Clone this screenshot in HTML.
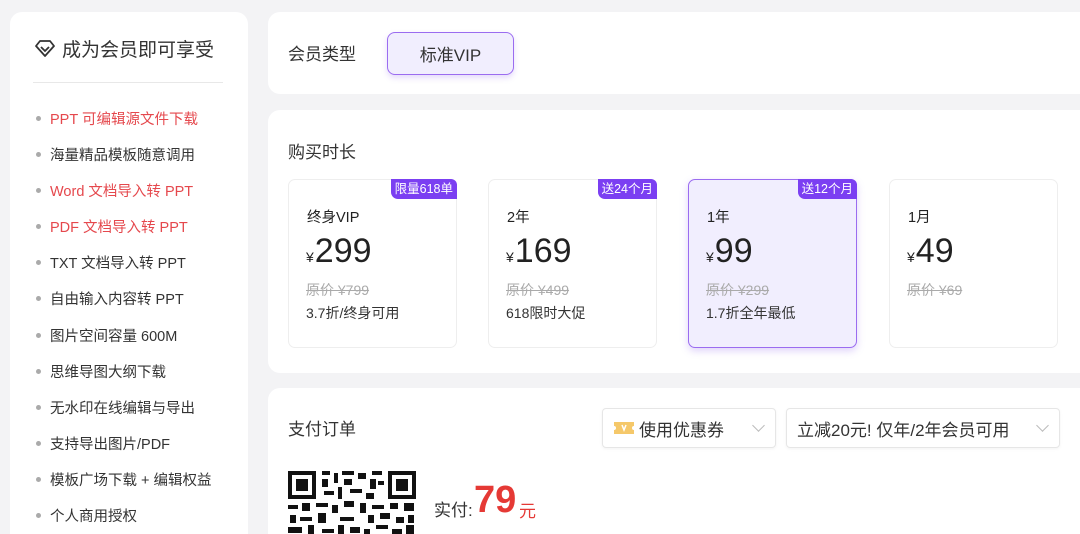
<!DOCTYPE html>
<html><head><meta charset="utf-8"><style>
*{margin:0;padding:0;box-sizing:border-box}
html,body{width:1080px;height:534px;overflow:hidden}
body{background:#f3f3f5;font-family:"Liberation Sans","Noto Sans CJK SC",sans-serif;color:#333;position:relative}
.panel{position:absolute;background:#fff;border-radius:12px}
.left{left:10px;top:12px;width:238px;height:540px}
.ttl{position:absolute;left:24px;top:23px;font-size:19px;color:#333;display:flex;align-items:center;gap:6px}
.hr{position:absolute;left:23px;top:70px;width:190px;height:1px;background:#e8e8e8}
.li{position:absolute;left:40px;font-size:14.5px;color:#333}
.li:before{content:"";position:absolute;left:-14px;top:8px;width:5px;height:5px;border-radius:50%;background:#aaa}
.li.r{color:#e5484d}
.lbl{position:absolute;font-size:17px;color:#333}
.card{position:absolute;top:179px;width:169px;height:169px;border:1px solid #eee;border-radius:7px;background:#fff}
.card.sel{border:1.5px solid #9b6cf0;background:#f1eefe;box-shadow:0 3px 8px rgba(150,110,240,.3)}
.tag{position:absolute;right:-1px;top:-1px;background:#7b3ff2;color:#fff;font-size:12.5px;padding:1px 4px;border-radius:0 6px 0 7px;line-height:18px}
.nm{position:absolute;left:18px;top:26px;font-size:14.5px;color:#222}
.pr{position:absolute;left:17px;top:52px;font-size:34px;color:#222}
.pr small{font-size:14px;margin-right:1px}
.op{position:absolute;left:17px;top:100px;font-size:14px;color:#aaa;text-decoration:line-through}
.ds{position:absolute;left:17px;top:123px;font-size:14px;color:#333}
.dd{position:absolute;top:408px;height:40px;border:1px solid #e6e6e6;border-radius:4px;font-size:17px;color:#333;display:flex;align-items:center;padding-left:10px;box-shadow:0 1px 3px rgba(0,0,0,.05)}
.dd .ch{position:absolute;right:12px;top:12px;width:9px;height:9px;border-right:1px solid #bbb;border-bottom:1px solid #bbb;transform:rotate(45deg)}
</style></head><body>
<div class="panel left">
 <div class="ttl"><svg width="22" height="20" viewBox="0 0 22 20"><path d="M6 2h10l4 5-9 10-9-10z" fill="none" stroke="#333" stroke-width="1.8" stroke-linejoin="round"/><path d="M7 8l4 4 4-4" fill="none" stroke="#333" stroke-width="1.8"/></svg>成为会员即可享受</div>
 <div class="hr"></div>
 <div class="li r" style="top:96px">PPT 可编辑源文件下载</div>
 <div class="li" style="top:132px">海量精品模板随意调用</div>
 <div class="li r" style="top:168px">Word 文档导入转 PPT</div>
 <div class="li r" style="top:204px">PDF 文档导入转 PPT</div>
 <div class="li" style="top:240px">TXT 文档导入转 PPT</div>
 <div class="li" style="top:276px">自由输入内容转 PPT</div>
 <div class="li" style="top:313px">图片空间容量 600M</div>
 <div class="li" style="top:349px">思维导图大纲下载</div>
 <div class="li" style="top:385px">无水印在线编辑与导出</div>
 <div class="li" style="top:421px">支持导出图片/PDF</div>
 <div class="li" style="top:457px">模板广场下载 + 编辑权益</div>
 <div class="li" style="top:493px">个人商用授权</div>
</div>
<div class="panel" style="left:268px;top:12px;width:830px;height:82px">
 <div class="lbl" style="left:20px;top:28px">会员类型</div>
 <div style="position:absolute;left:119px;top:20px;width:127px;height:43px;border:1.5px solid #9b6cf0;border-radius:8px;background:#f1eefe;font-size:17px;color:#333;display:flex;align-items:center;justify-content:center;box-shadow:0 3px 6px rgba(150,110,240,.25)">标准VIP</div>
</div>
<div class="panel" style="left:268px;top:110px;width:830px;height:263px">
 <div class="lbl" style="left:20px;top:28px">购买时长</div>
</div>
<div class="card" style="left:288px"><div class="tag">限量618单</div><div class="nm">终身VIP</div><div class="pr"><small>¥</small>299</div><div class="op">原价 ¥799</div><div class="ds">3.7折/终身可用</div></div>
<div class="card" style="left:488px"><div class="tag">送24个月</div><div class="nm">2年</div><div class="pr"><small>¥</small>169</div><div class="op">原价 ¥499</div><div class="ds">618限时大促</div></div>
<div class="card sel" style="left:688px"><div class="tag">送12个月</div><div class="nm">1年</div><div class="pr"><small>¥</small>99</div><div class="op">原价 ¥299</div><div class="ds">1.7折全年最低</div></div>
<div class="card" style="left:889px"><div class="nm">1月</div><div class="pr"><small>¥</small>49</div><div class="op">原价 ¥69</div></div>
<div class="panel" style="left:268px;top:388px;width:830px;height:160px">
 <div class="lbl" style="left:20px;top:27px">支付订单</div>
</div>
<div class="dd" style="left:602px;width:174px"><svg width="22" height="16" viewBox="0 0 22 16" style="margin-right:4px"><path d="M1 2h20v4a2 2 0 0 0 0 4v4H1v-4a2 2 0 0 0 0-4z" fill="#f5c86a"/><path d="M9 5l2 5 2-5" stroke="#fff" stroke-width="1.5" fill="none"/></svg>使用优惠券<span class="ch"></span></div>
<div class="dd" style="left:786px;width:274px">立减20元!&nbsp;仅年/2年会员可用<span class="ch"></span></div>
<svg style="position:absolute;left:288px;top:471px" width="128" height="70" viewBox="0 0 128 70">
<rect x="0" y="0" width="28" height="28" fill="#111"/><rect x="4" y="4" width="20" height="20" fill="#fff"/><rect x="8" y="8" width="12" height="12" fill="#111"/>
<rect x="100" y="0" width="28" height="28" fill="#111"/><rect x="104" y="4" width="20" height="20" fill="#fff"/><rect x="108" y="8" width="12" height="12" fill="#111"/>
<g fill="#111">
<rect x="34" y="0" width="8" height="4"/><rect x="46" y="2" width="4" height="10"/><rect x="54" y="0" width="12" height="4"/><rect x="70" y="2" width="8" height="6"/><rect x="84" y="0" width="10" height="4"/>
<rect x="34" y="8" width="6" height="8"/><rect x="56" y="8" width="8" height="6"/><rect x="82" y="8" width="6" height="10"/><rect x="90" y="10" width="6" height="4"/>
<rect x="36" y="20" width="10" height="4"/><rect x="50" y="16" width="4" height="12"/><rect x="62" y="18" width="12" height="4"/><rect x="78" y="22" width="8" height="6"/>
<rect x="0" y="34" width="10" height="4"/><rect x="14" y="32" width="8" height="8"/><rect x="28" y="32" width="12" height="4"/><rect x="44" y="34" width="6" height="8"/><rect x="56" y="30" width="10" height="6"/><rect x="72" y="32" width="6" height="10"/><rect x="84" y="34" width="12" height="4"/><rect x="102" y="32" width="8" height="6"/><rect x="116" y="32" width="10" height="8"/>
<rect x="2" y="44" width="6" height="8"/><rect x="12" y="46" width="12" height="4"/><rect x="30" y="42" width="8" height="10"/><rect x="52" y="46" width="14" height="4"/><rect x="80" y="44" width="6" height="8"/><rect x="92" y="42" width="10" height="6"/><rect x="108" y="46" width="8" height="6"/><rect x="120" y="44" width="6" height="8"/>
<rect x="0" y="56" width="14" height="6"/><rect x="20" y="54" width="6" height="10"/><rect x="34" y="58" width="12" height="4"/><rect x="50" y="54" width="6" height="12"/><rect x="62" y="56" width="10" height="6"/><rect x="76" y="58" width="6" height="8"/><rect x="88" y="54" width="12" height="4"/><rect x="104" y="58" width="10" height="6"/><rect x="118" y="54" width="8" height="10"/>
</g></svg>
<div style="position:absolute;left:434px;top:496px;font-size:17px;color:#333">实付:</div>
<div style="position:absolute;left:474px;top:479px;font-size:38px;font-weight:bold;color:#e53935">79</div>
<div style="position:absolute;left:519px;top:497px;font-size:17px;color:#e53935">元</div>
</body></html>
